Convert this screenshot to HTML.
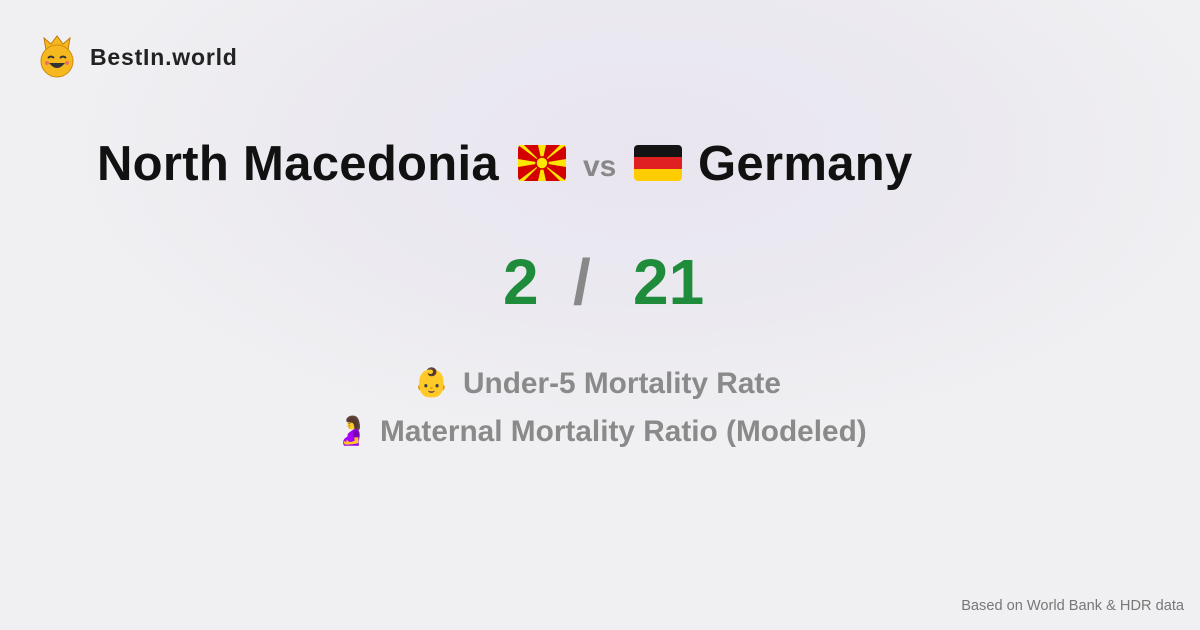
<!DOCTYPE html>
<html><head><meta charset="utf-8"><style>
body{margin:0;width:1200px;height:630px;overflow:hidden;font-family:"Liberation Sans",sans-serif;
background:radial-gradient(ellipse 600px 300px at 650px 150px,#e9e5f0 0%,#ebe9f0 50%,#f0f0f2 100%);position:relative}
.abs{position:absolute}
.logo{left:90px;top:44px;font-size:23px;font-weight:bold;color:#222;letter-spacing:0.8px}
.title{top:136px;left:97px;font-size:49px;font-weight:bold;color:#111;white-space:nowrap;letter-spacing:0.3px}
.vs{top:150px;left:583px;font-size:30px;font-weight:bold;color:#888}
.num{top:245px;font-size:64px;font-weight:bold;color:#1f8c3b}
.m{font-size:29.8px;font-weight:bold;color:#8a8a8a;white-space:nowrap}
.e{font-size:28px}
.foot{right:16px;top:598px;font-size:14.6px;color:#777}
</style></head><body>
<svg class="abs" style="left:38px;top:34px" width="38" height="44" viewBox="0 0 38 44">
<path d="M8 16 L6 4 L13 10 L19 2 L25 10 L32 4 L30 16Z" fill="#f5b81f" stroke="#c07a10" stroke-width="1"/>
<circle cx="19" cy="27" r="16" fill="#f5b81f" stroke="#d08a10" stroke-width="1"/>
<path d="M10 24 q3 -3 6 0 M22 24 q3 -3 6 0" stroke="#333" stroke-width="2" fill="none"/>
<path d="M11 29 q8 10 16 0z" fill="#333"/><circle cx="9" cy="29" r="2" fill="#f07060"/><circle cx="29" cy="29" r="2" fill="#f07060"/>
</svg>
<div class="abs logo">BestIn.world</div>
<div class="abs title">North Macedonia</div>
<svg class="abs" style="left:518px;top:145px" width="48" height="36" viewBox="0 0 48 36">
<rect width="48" height="36" rx="4" fill="#d20000"/>
<g fill="#ffe600"><path d="M20 0h8L24 18z M20 36h8L24 18z M0 14v8L24 18z M48 14v8L24 18z M0 0h6L24 18z M48 0h-6L24 18z M0 36h6L24 18z M48 36h-6L24 18z"/><circle cx="24" cy="18" r="6" stroke="#d20000" stroke-width="1.5"/></g>
</svg>
<div class="abs vs">vs</div>
<svg class="abs" style="left:634px;top:145px" width="48" height="36" viewBox="0 0 48 36">
<clipPath id="c"><rect width="48" height="36" rx="4"/></clipPath>
<g clip-path="url(#c)"><rect width="48" height="12" fill="#141414"/><rect y="12" width="48" height="12" fill="#e02020"/><rect y="24" width="48" height="12" fill="#ffcc00"/></g>
</svg>
<div class="abs title" style="left:698px">Germany</div>
<div class="abs num" style="left:503px">2</div>
<div class="abs num" style="left:573px;color:#888">/</div>
<div class="abs num" style="left:633px">21</div>
<div class="abs m e" style="left:414px;top:366px">👶</div>
<div class="abs m" style="left:463px;top:367px">Under-5 Mortality Rate</div>
<div class="abs m e" style="left:334px;top:414px">🤰</div>
<div class="abs m" style="left:380px;top:415px">Maternal Mortality Ratio (Modeled)</div>
<div class="abs foot">Based on World Bank &amp; HDR data</div>
</body></html>
